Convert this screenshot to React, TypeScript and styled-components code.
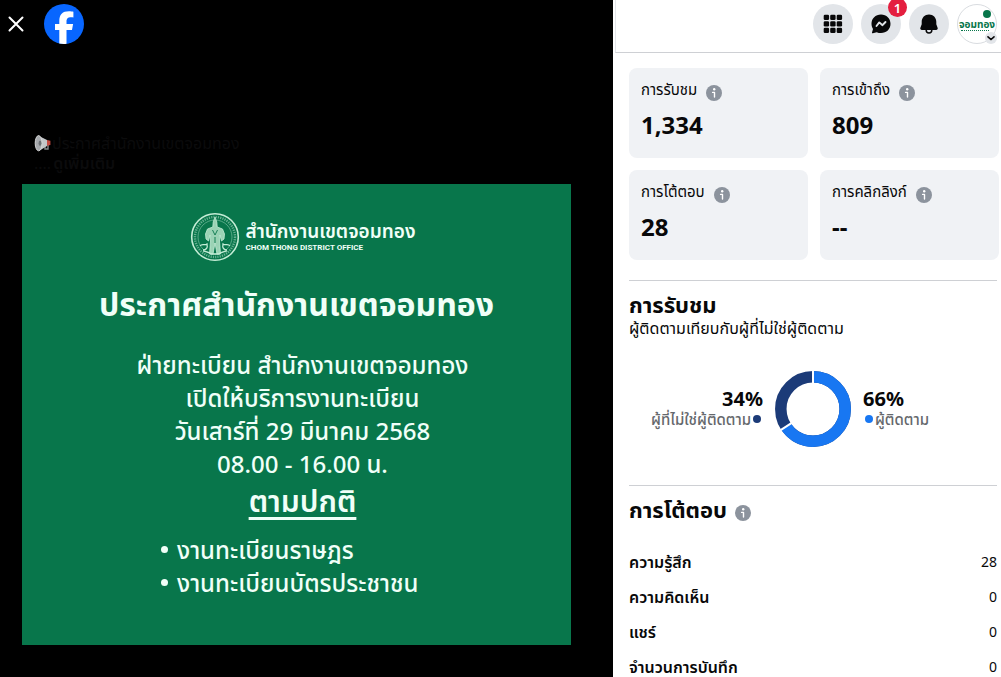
import React from "react";
import styled, { createGlobalStyle } from "styled-components";

const GlobalStyle = createGlobalStyle`
  * { box-sizing: border-box; }
  body {
    margin: 0;
    background: #fff;
    color: #080809;
    font-family: "Noto Sans", "Noto Sans Thai", sans-serif;
    font-size: 14px;
  }
  h1, h2, h3, p, ul, dl, dd, dt, figure { margin: 0; padding: 0; }
  button { border: 0; padding: 0; background: none; color: inherit; font: inherit; cursor: pointer; }
`;

const Page = styled.div`
  display: grid;
  grid-template-columns: minmax(0, 1fr) 388px;
  height: 100vh;
  overflow: hidden;
`;

/* Viewer side */

const Viewer = styled.main`
  background: #000;
  overflow: hidden;
`;

const ViewerBar = styled.header`
  display: flex;
  align-items: center;
  gap: 20px;
  height: 48px;
  padding-left: 8px;
`;

const PlainButton = styled.button`
  display: flex;
`;

const HomeLink = styled.a`
  display: flex;
`;

const Post = styled.article`
  padding: 85px 42px 0 22px;
`;

const Caption = styled.p`
  height: 51px;
  padding-left: 12px;
  color: #0b0b0c;
  font-size: 16px;
  line-height: 20px;
`;

const CaptionLine = styled.span`
  display: flex;
  align-items: center;
`;

const MoreButton = styled.button`
  margin-left: 2px;
  font-weight: 600;
`;

const Poster = styled.figure`
  display: flex;
  flex-direction: column;
  align-items: center;
  height: 461px;
  padding-top: 28px;
  background: #08764b;
  color: #f0fff8;
`;

const Brand = styled.div`
  display: flex;
  align-items: center;
  gap: 6px;
  margin-left: 12px;
`;

const BrandName = styled.div`
  font-size: 19px;
  font-weight: 600;
  line-height: 22px;
`;

const BrandSub = styled.div`
  font-family: Roboto, sans-serif;
  font-size: 8px;
  font-weight: 700;
  line-height: 12px;
`;

const PosterTitle = styled.h1`
  margin-top: 16px;
  font-size: 32px;
  font-weight: 700;
  line-height: 52px;
  white-space: nowrap;
`;

const PosterText = styled.p`
  margin-top: 18px;
  padding-left: 12px;
  font-size: 24px;
  font-weight: 500;
  line-height: 33px;
  text-align: center;
  white-space: nowrap;
`;

const PosterStress = styled.p`
  padding-left: 12px;
  font-size: 30px;
  font-weight: 600;
  line-height: 42px;
  text-decoration: underline;
  text-underline-offset: 5px;
`;

const PosterList = styled.ul`
  align-self: flex-start;
  margin: 11px 0 0 139px;
  font-size: 24px;
  font-weight: 500;
  line-height: 33px;
  list-style: none;
  white-space: nowrap;
`;

const PosterItem = styled.li`
  display: flex;
  align-items: center;
  gap: 9px;

  &::before {
    content: "";
    width: 7px;
    height: 7px;
    border-radius: 50%;
    background: currentColor;
  }
`;

/* Insight side */

const Panel = styled.aside`
  overflow: hidden;
`;

const PanelBar = styled.header`
  display: flex;
  justify-content: flex-end;
  gap: 8px;
  height: 53px;
  margin-left: 2px;
  padding: 4px 4px 0 0;
  border-bottom: 1px solid #ced0d4;
  border-left: 1px solid #e4e6ea;
`;

const RoundButton = styled.button`
  position: relative;
  display: flex;
  align-items: center;
  justify-content: center;
  width: 40px;
  height: 40px;
  border-radius: 50%;
  background: #e2e5e9;
`;

const AvatarButton = styled(RoundButton)`
  border: 1px solid #d9dce0;
  background: #fff;
`;

const Badge = styled.span`
  position: absolute;
  top: -6px;
  right: -6px;
  display: flex;
  align-items: center;
  justify-content: center;
  width: 19px;
  height: 19px;
  border-radius: 50%;
  background: #e41e3f;
  color: #fff;
  font-size: 13px;
  font-weight: 600;
  line-height: 14px;
`;

const AvatarText = styled.span`
  color: #08764b;
  font-size: 10px;
  font-weight: 700;
  line-height: 16px;
`;

const AvatarMark = styled.span`
  position: absolute;
  top: 5px;
  right: 5px;
  width: 8px;
  height: 8px;
  border-radius: 50%;
  background: #08764b;
`;

const AvatarLine = styled.span`
  position: absolute;
  top: 25px;
  left: 3px;
  width: 28px;
  border-top: 1px dotted #08764b;
`;

const AvatarArrow = styled.span`
  position: absolute;
  right: -1px;
  bottom: -1px;
  display: flex;
  align-items: center;
  justify-content: center;
  width: 12px;
  height: 12px;
  border-radius: 50%;
  background: #e2e5e9;
`;

const PanelBody = styled.div`
  padding: 15px 2px 0 16px;
`;

const Cards = styled.section`
  display: grid;
  grid-template-columns: 1fr 1fr;
  gap: 12px;
`;

const Card = styled.div`
  height: 90px;
  padding: 11px 12px;
  border-radius: 8px;
  background: #f0f2f5;
`;

const CardLabel = styled.h3`
  display: flex;
  gap: 9px;
  font-size: 15px;
  font-weight: 400;
  line-height: 20px;
  white-space: nowrap;
`;

const CardValue = styled.p`
  margin-top: 8px;
  font-size: 24px;
  font-weight: 700;
  line-height: 32px;
`;

const InfoButton = styled.button`
  display: flex;
  align-self: flex-start;
  margin-top: 6px;
`;

const Section = styled.section<{ $height?: number }>`
  margin: 20px 2px 0 0;
  padding-top: 11px;
  border-top: 1px solid #ced0d4;
  min-height: ${(p) => (p.$height ? `${p.$height}px` : "0")};
`;

const Heading = styled.h2`
  display: flex;
  gap: 8px;
  font-size: 22px;
  font-weight: 700;
  line-height: 24px;

  ${InfoButton} { margin-top: 8px; }
`;

const Sub = styled.p`
  font-size: 16px;
  line-height: 24px;
`;

const Split = styled.div`
  display: grid;
  grid-template-columns: 1fr 76px 1fr;
  gap: 12px;
  align-items: center;
  margin-top: 31px;
`;

const Share = styled.div<{ $end?: boolean }>`
  display: flex;
  flex-direction: column;
  align-items: ${(p) => (p.$end ? "flex-end" : "flex-start")};
`;

const ShareValue = styled.strong`
  font-size: 20px;
  line-height: 20px;
`;

const ShareLabel = styled.span`
  display: flex;
  align-items: center;
  gap: 2px;
  padding: 0 2px;
  color: #65686c;
  font-size: 15px;
  font-weight: 500;
  line-height: 20px;
  white-space: nowrap;
`;

const Dot = styled.i<{ $color: string }>`
  width: 8px;
  height: 8px;
  border-radius: 50%;
  background: ${(p) => p.$color};
`;

const Stats = styled.dl`
  margin-top: 25px;
`;

const Stat = styled.div`
  display: flex;
  justify-content: space-between;
  height: 35px;
  line-height: 32px;

  dt { font-size: 16px; font-weight: 600; }
  dd { font-size: 14px; }
`;

const Info = () => (
  <InfoButton aria-label="ข้อมูล">
    <svg width="16" height="16" viewBox="0 0 16 16">
      <circle cx="8" cy="8" r="8" fill="#8c939d" />
      <circle cx="8.2" cy="4.3" r="1.2" fill="#fff" />
      <path d="M6.6 7.4H8.5V12" fill="none" stroke="#fff" strokeWidth="1.4" strokeLinecap="round" strokeLinejoin="round" />
    </svg>
  </InfoButton>
);

const FacebookLogo = () => (
  <svg width="40" height="40" viewBox="0 0 40 40">
    <circle cx="20" cy="20" r="20" fill="#0866ff" />
    <path
      d="M15.3 39.5V26H11v-6h4.3v-2.8c0-6.8 3.1-9.9 9.7-9.9 1.3 0 3.5.2 4.4.5v5.6c-.5 0-1.3-.1-2.3-.1-3.3 0-4.6 1.2-4.6 4.5V20h6.6l-1.1 6h-5.5v13.8c-2.4.3-4.9.2-7.2-.3z"
      fill="#fff"
    />
  </svg>
);

const Megaphone = () => (
  <svg width="18" height="18" viewBox="0 0 18 18">
    <path d="M11 10v5h3V8" fill="none" stroke="#85888c" strokeWidth="1.4" />
    <path d="M4 1.5L13 6v6L5 17z" fill="#c4c6c9" />
    <ellipse cx="4.6" cy="9.2" rx="3.4" ry="7.6" fill="#a6a9ad" stroke="#d5d5d5" />
    <ellipse cx="6" cy="9.2" rx="1.4" ry="2.6" fill="#6d7175" />
    <path d="M13 5.9l3.4.8v4.4L13 11.8z" fill="#c64a42" />
  </svg>
);

const Emblem = () => (
  <svg width="50" height="50" viewBox="0 0 50 50" fill="none" stroke="#c3ecd5">
    <circle cx="25" cy="25" r="23.3" strokeWidth="1.6" />
    <circle cx="25" cy="25" r="20" strokeWidth="2.4" strokeDasharray="1.2 1.1" opacity=".5" />
    <circle cx="25" cy="25" r="17" strokeWidth=".7" opacity=".6" />
    <path
      d="M25 5l1.800 5 .4 5 5.300 2 2 5-.5 5-2.500 2-1.500-6-.5 6 1 13h-3.500l-2-11-2 11h-3.500l1-13-.5-6-1.500 6-2.500-2-.5-5 2-5 5.300-2 .4-5z"
      fill="#9bd3b5"
      strokeWidth=".8"
    />
    <path d="M22.500 18l2.500 5 2.500-5M25 25v6" stroke="#08764b" strokeWidth=".9" />
    <path d="M10 34c2-3 5 0 7-2 1 4-1 6-4 6M40 34c-2-3-5 0-7-2-1 4 1 6 4 6M13 39c3 1 6 1 8 3h8c2-2 5-2 8-3" strokeWidth="1.300" />
  </svg>
);

const Donut = () => (
  <svg width="76" height="76" viewBox="0 0 76 76" role="img" aria-label="66% / 34%">
    <g transform="rotate(-90 38 38)" fill="none" strokeWidth="11.5">
      <circle cx="38" cy="38" r="32.2" stroke="#1c3b78" />
      <circle cx="38" cy="38" r="32.2" stroke="#1877f2" pathLength="100" strokeDasharray="66 34" />
    </g>
    <path d="M38 0v13M5.6 59.2L16.8 51.8" stroke="#fff" strokeWidth="2" />
  </svg>
);

const cards = [
  ["การรับชม", "1,334"],
  ["การเข้าถึง", "809"],
  ["การโต้ตอบ", "28"],
  ["การคลิกลิงก์", "--"],
];

const stats = [
  ["ความรู้สึก", "28"],
  ["ความคิดเห็น", "0"],
  ["แชร์", "0"],
  ["จำนวนการบันทึก", "0"],
];

export default function App() {
  return (
    <>
      <GlobalStyle />
      <Page>
        <Viewer>
          <ViewerBar>
            <PlainButton aria-label="ปิด">
              <svg width="16" height="16" viewBox="0 0 16 16" stroke="#fff" strokeWidth="2" strokeLinecap="round">
                <path d="M1.5 1.5l13 13M14.5 1.5l-13 13" />
              </svg>
            </PlainButton>
            <HomeLink href="#" aria-label="Facebook">
              <FacebookLogo />
            </HomeLink>
          </ViewerBar>
          <Post>
            <Caption>
              <CaptionLine>
                <Megaphone />
                ประกาศสำนักงานเขตจอมทอง
              </CaptionLine>
              <CaptionLine>
                ....<MoreButton>ดูเพิ่มเติม</MoreButton>
              </CaptionLine>
            </Caption>
            <Poster>
              <Brand>
                <Emblem />
                <div>
                  <BrandName>สำนักงานเขตจอมทอง</BrandName>
                  <BrandSub>CHOM THONG DISTRICT OFFICE</BrandSub>
                </div>
              </Brand>
              <PosterTitle>ประกาศสำนักงานเขตจอมทอง</PosterTitle>
              <PosterText>
                ฝ่ายทะเบียน สำนักงานเขตจอมทอง
                <br />
                เปิดให้บริการงานทะเบียน
                <br />
                วันเสาร์ที่ 29 มีนาคม 2568
                <br />
                08.00 - 16.00 น.
              </PosterText>
              <PosterStress>ตามปกติ</PosterStress>
              <PosterList>
                <PosterItem>งานทะเบียนราษฎร</PosterItem>
                <PosterItem>งานทะเบียนบัตรประชาชน</PosterItem>
              </PosterList>
            </Poster>
          </Post>
        </Viewer>
        <Panel>
          <PanelBar>
            <RoundButton aria-label="เมนู">
              <svg width="20" height="20" viewBox="0 0 20 20" fill="#080809">
                {[0.7, 7.2, 13.7].map((y) =>
                  [0.7, 7.2, 13.7].map((x) => <rect key={`${x}-${y}`} x={x} y={y} width="5.4" height="5.4" rx="1.3" />)
                )}
              </svg>
            </RoundButton>
            <RoundButton aria-label="Messenger">
              <svg width="20" height="20" viewBox="0 0 20 20">
                <path
                  d="M10 .5C4.5.5.5 4.5.5 9.800c0 2 .5 3.700 1.500 5.200L1 18.500c-.2.600.3 1 .9.800l3.800-1.100c1.300.6 2.700.9 4.300.9 5.500 0 9.500-4 9.500-9.300S15.500.5 10 .5z"
                  fill="#080809"
                />
                <path d="M5.500 12l2.800-3.600 3.200 2.800 3-3.200" fill="none" stroke="#e2e5e9" strokeWidth="1.900" strokeLinecap="round" strokeLinejoin="round" />
              </svg>
              <Badge>1</Badge>
            </RoundButton>
            <RoundButton aria-label="การแจ้งเตือน">
              <svg width="20" height="20" viewBox="0 0 20 20" fill="#080809">
                <path d="M10 .5c-4.200 0-7.300 3.200-7.300 7.300v2.400l-1.300 3.600c-.5 1.300.3 2.200 1.500 2.200h14.200c1.200 0 2-.9 1.500-2.200l-1.300-3.600V7.800C17.300 3.700 14.200.5 10 .5z" />
                <path d="M7.200 16c0 1.800 1.200 3 2.800 3s2.800-1.200 2.800-3" fill="none" stroke="#080809" strokeWidth="1.500" />
              </svg>
            </RoundButton>
            <AvatarButton aria-label="บัญชี">
              <AvatarText>จอมทอง</AvatarText>
              <AvatarMark />
              <AvatarLine />
              <AvatarArrow>
                <svg width="8" height="8" viewBox="0 0 8 8" fill="none" stroke="#080809" strokeWidth="1.600" strokeLinecap="round">
                  <path d="M1 2.800l3 2.700 3-2.700" />
                </svg>
              </AvatarArrow>
            </AvatarButton>
          </PanelBar>
          <PanelBody>
            <Cards>
              {cards.map(([label, value]) => (
                <Card key={label}>
                  <CardLabel>
                    {label}
                    <Info />
                  </CardLabel>
                  <CardValue>{value}</CardValue>
                </Card>
              ))}
            </Cards>
            <Section $height={185}>
              <Heading>การรับชม</Heading>
              <Sub>ผู้ติดตามเทียบกับผู้ที่ไม่ใช่ผู้ติดตาม</Sub>
              <Split>
                <Share $end>
                  <ShareValue>34%</ShareValue>
                  <ShareLabel>
                    ผู้ที่ไม่ใช่ผู้ติดตาม
                    <Dot $color="#1c3b78" />
                  </ShareLabel>
                </Share>
                <Donut />
                <Share>
                  <ShareValue>66%</ShareValue>
                  <ShareLabel>
                    <Dot $color="#1877f2" />
                    ผู้ติดตาม
                  </ShareLabel>
                </Share>
              </Split>
            </Section>
            <Section>
              <Heading>
                การโต้ตอบ
                <Info />
              </Heading>
              <Stats>
                {stats.map(([label, value]) => (
                  <Stat key={label}>
                    <dt>{label}</dt>
                    <dd>{value}</dd>
                  </Stat>
                ))}
              </Stats>
            </Section>
          </PanelBody>
        </Panel>
      </Page>
    </>
  );
}
